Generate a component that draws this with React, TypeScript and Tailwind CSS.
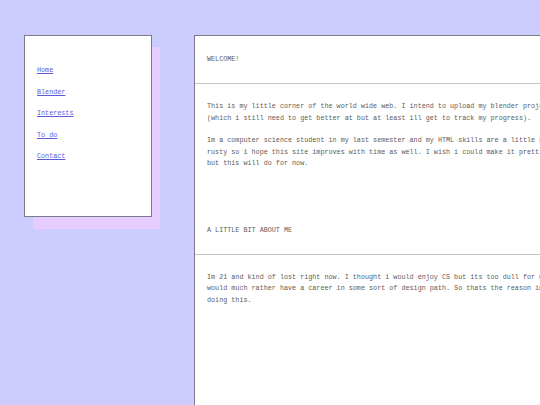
const links = ['Home', 'Blender', 'Interests', 'To do', 'Contact']

export default function App() {
    return (
        <div
            className="h-[405px] w-[540px] overflow-hidden bg-[#ccccff] text-[6.75px] leading-[11.5px] text-[#5c5c5c]"
            style={{ fontFamily: '"Liberation Mono", "DejaVu Sans Mono", monospace' }}
        >
            <div className="flex items-start gap-[42px] pl-[24px] pt-[35px]">
                {/* Sidebar with offset shadow */}
                <div className="relative h-[182px] w-[128px] shrink-0">
                    <div className="absolute left-[9px] top-[12px] h-[182px] w-[127px] bg-[#e6ccff]" />
                    <nav className="relative flex h-full flex-col gap-[10px] border border-[#7a7a88] bg-white pl-[12px] pt-[29px]">
                        {links.map(link => (
                            <a key={link} href="#" className="text-[#5a5ad6] underline">
                                {link}
                            </a>
                        ))}
                    </nav>
                </div>

                {/* Main content */}
                <main className="h-[400px] w-[420px] shrink-0 border border-[#7a7a88] bg-white">
                    <div className="flex h-[47px] items-center px-[12px] pt-[1px]">WELCOME!</div>
                    <div className="border-t border-[#c4c4c4] px-[12px] pb-[37px] pt-[17px]">
                        <p className="whitespace-nowrap">
                            This is my little corner of the world wide web. I intend to upload my blender projects
                            <br />
                            (which i still need to get better at but at least ill get to track my progress).
                        </p>
                        <p className="mt-[11px] whitespace-nowrap">
                            Im a computer science student in my last semester and my HTML skills are a little bit
                            <br />
                            rusty so i hope this site improves with time as well. I wish i could make it prettier
                            <br />
                            but this will do for now.
                        </p>
                    </div>
                    <div className="flex h-[47px] items-center px-[12px] pt-[1px]">A LITTLE BIT ABOUT ME</div>
                    <div className="border-t border-[#c4c4c4] px-[12px] pt-[17px]">
                        <p className="whitespace-nowrap">
                            Im 21 and kind of lost right now. I thought i would enjoy CS but its too dull for me. I
                            <br />
                            would much rather have a career in some sort of design path. So thats the reason im
                            <br />
                            doing this.
                        </p>
                    </div>
                </main>
            </div>
        </div>
    )
}
